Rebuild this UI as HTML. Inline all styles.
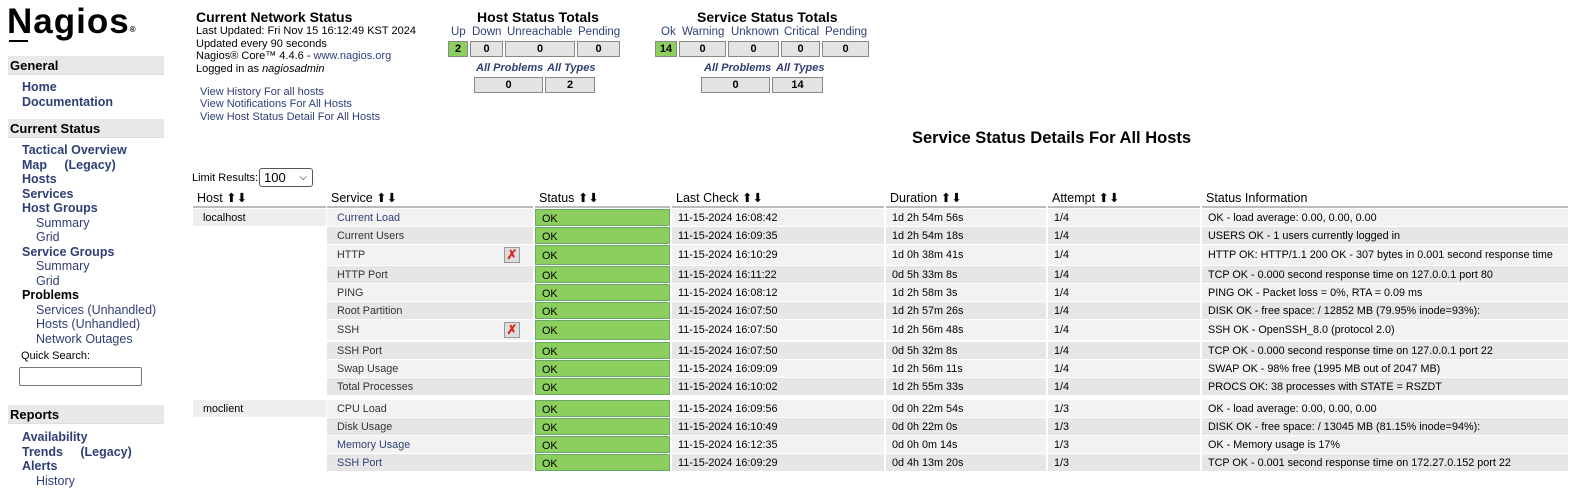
<!DOCTYPE html>
<html><head><meta charset="utf-8"><style>
body{margin:0;width:1572px;height:481px;overflow:hidden;background:#fff;font-family:"Liberation Sans",Arial,sans-serif;color:#000;position:relative}
.a{position:absolute;white-space:nowrap}
.nav{font-size:12.5px;font-weight:bold;color:#2f3f75;line-height:14.5px}
.sub{font-weight:normal;color:#2f3f75}
.hd{position:absolute;left:8px;width:156px;height:19px;background:#e8e8e8;border-bottom:1px solid #ddd;font-weight:bold;font-size:13px;line-height:19px;padding-left:2px;box-sizing:border-box}
.lk{color:#2f3f75}
.box{position:absolute;height:16px;background:#e3e3e3;border:1px solid #888;box-sizing:border-box;font-size:11px;font-weight:bold;text-align:center;line-height:15px}
.g{background:#8ccf5f}
.lbl{position:absolute;font-size:11.5px;color:#2f3f75;white-space:nowrap}
.it{font-size:11px;font-style:italic;font-weight:bold}
.cell{position:absolute;font-size:10.8px;line-height:18px;padding-left:6px;box-sizing:border-box;white-space:nowrap}
.th{position:absolute;top:191px;height:17px;font-size:12.5px;border-bottom:2px solid #bbb;box-sizing:border-box;padding-left:4px;line-height:15px}
</style></head><body>
<div class="a" style="left:7px;top:3px;font-size:35px;font-weight:bold;letter-spacing:1px;line-height:38px">Nagios<span style="font-size:8px;vertical-align:top;position:relative;top:8px">®</span></div>
<div class="a" style="left:9px;top:40px;width:19px;height:2px;background:#000"></div>
<div class="hd" style="top:56px">General</div>
<div class="a nav" style="left:22px;top:80px">Home<br>Documentation</div>
<div class="hd" style="top:119px">Current Status</div>
<div class="a nav" style="left:22px;top:143px">Tactical Overview<br>Map &nbsp;&nbsp;&nbsp;&nbsp;<span class="sub" style="font-weight:bold">(Legacy)</span><br>Hosts<br>Services<br>Host Groups<br><span class="sub" style="padding-left:14px">Summary</span><br><span class="sub" style="padding-left:14px">Grid</span><br>Service Groups<br><span class="sub" style="padding-left:14px">Summary</span><br><span class="sub" style="padding-left:14px">Grid</span><br><span style="color:#000">Problems</span><br><span class="sub" style="padding-left:14px">Services (Unhandled)</span><br><span class="sub" style="padding-left:14px">Hosts (Unhandled)</span><br><span class="sub" style="padding-left:14px">Network Outages</span></div>
<div class="a" style="left:21px;top:350px;font-size:11px">Quick Search:</div>
<div class="a" style="left:19px;top:367px;width:123px;height:19px;border:1px solid #777;border-radius:2px;box-sizing:border-box"></div>
<div class="hd" style="top:405px">Reports</div>
<div class="a nav" style="left:22px;top:430px">Availability<br>Trends &nbsp;&nbsp;&nbsp;&nbsp;<span class="sub" style="font-weight:bold">(Legacy)</span><br>Alerts<br><span class="sub" style="padding-left:14px">History</span></div>

<div class="a" style="left:196px;top:9px;font-size:14px;font-weight:bold">Current Network Status</div>
<div class="a" style="left:196px;top:25px;font-size:11px;line-height:12.5px">Last Updated: Fri Nov 15 16:12:49 KST 2024<br>Updated every 90 seconds<br>Nagios® Core™ 4.4.6 - <span class="lk">www.nagios.org</span><br>Logged in as <i>nagiosadmin</i></div>
<div class="a lk" style="left:200px;top:86px;font-size:11px;line-height:12.3px">View History For all hosts<br>View Notifications For All Hosts<br>View Host Status Detail For All Hosts</div>

<div class="a" style="left:477px;top:9px;font-size:14px;font-weight:bold">Host Status Totals</div>
<div class="lbl" style="left:451px;top:26px">Up</div><div class="lbl" style="left:472px;top:26px">Down</div><div class="lbl" style="left:507px;top:26px">Unreachable</div><div class="lbl" style="left:578px;top:26px">Pending</div>
<div class="box g" style="left:448px;top:41px;width:20px">2</div>
<div class="box" style="left:470px;top:41px;width:33px">0</div>
<div class="box" style="left:505px;top:41px;width:70px">0</div>
<div class="box" style="left:577px;top:41px;width:43px">0</div>
<div class="lbl it" style="left:476px;top:62px">All Problems</div><div class="lbl it" style="left:547px;top:62px">All Types</div>
<div class="box" style="left:474px;top:77px;width:69px">0</div>
<div class="box" style="left:545px;top:77px;width:50px">2</div>

<div class="a" style="left:697px;top:9px;font-size:14px;font-weight:bold">Service Status Totals</div>
<div class="lbl" style="left:661px;top:26px">Ok</div><div class="lbl" style="left:682px;top:26px">Warning</div><div class="lbl" style="left:731px;top:26px">Unknown</div><div class="lbl" style="left:784px;top:26px">Critical</div><div class="lbl" style="left:825px;top:26px">Pending</div>
<div class="box g" style="left:655px;top:41px;width:22px">14</div>
<div class="box" style="left:679px;top:41px;width:47px">0</div>
<div class="box" style="left:728px;top:41px;width:51px">0</div>
<div class="box" style="left:781px;top:41px;width:39px">0</div>
<div class="box" style="left:822px;top:41px;width:47px">0</div>
<div class="lbl it" style="left:704px;top:62px">All Problems</div><div class="lbl it" style="left:776px;top:62px">All Types</div>
<div class="box" style="left:701px;top:77px;width:69px">0</div>
<div class="box" style="left:772px;top:77px;width:51px">14</div>

<div class="a" style="left:912px;top:129px;font-size:16.5px;font-weight:bold">Service Status Details For All Hosts</div>
<div class="a" style="left:192px;top:172px;font-size:11px">Limit Results:</div>
<div class="a" style="left:259px;top:168px;width:54px;height:19px;border:1px solid #555;border-radius:3px;box-sizing:border-box;font-size:13px;line-height:17px;padding-left:4px">100 <span style="font-size:10px;position:absolute;right:5px">&#x2335;</span></div>

<div class="th" style="left:193px;width:133px">Host ⬆⬇</div>
<div class="th" style="left:327px;width:206px">Service ⬆⬇</div>
<div class="th" style="left:535px;width:135px">Status ⬆⬇</div>
<div class="th" style="left:672px;width:212px">Last Check ⬆⬇</div>
<div class="th" style="left:886px;width:160px">Duration ⬆⬇</div>
<div class="th" style="left:1048px;width:152px">Attempt ⬆⬇</div>
<div class="th" style="left:1202px;width:366px">Status Information</div>

<div class="cell" style="left:193px;top:209px;width:133px;height:17px;background:#eee;padding-left:10px">localhost</div>
<div class="cell" style="left:193px;top:400px;width:133px;height:17px;background:#eee;padding-left:10px">moclient</div>

<style>
.r .c1{left:327px;width:206px}.r .c2{left:535px;width:135px;background:#8ccf5f !important;border:1px solid #6a6;}
.r .c3{left:672px;width:212px}.r .c4{left:886px;width:160px}.r .c5{left:1048px;width:152px}.r .c6{left:1202px;width:366px}
.r .cell{height:17px}
.o .cell{background:#f2f2f2}.e .cell{background:#e6e6e6}
.ic{position:absolute;left:504px;width:16px;height:16px;background:#ddd;border:1px solid #999;box-sizing:border-box;color:#d22;font-size:13px;line-height:14px;text-align:center;font-weight:bold}
</style>
<div class="r o"><div class="cell c1 lk" style="top:209px;padding-left:10px">Current Load</div><div class="cell c2" style="top:209px">OK</div><div class="cell c3" style="top:209px">11-15-2024 16:08:42</div><div class="cell c4" style="top:209px">1d 2h 54m 56s</div><div class="cell c5" style="top:209px">1/4</div><div class="cell c6" style="top:209px">OK - load average: 0.00, 0.00, 0.00</div></div>
<div class="r e"><div class="cell c1" style="top:227px;padding-left:10px;color:#333">Current Users</div><div class="cell c2" style="top:227px">OK</div><div class="cell c3" style="top:227px">11-15-2024 16:09:35</div><div class="cell c4" style="top:227px">1d 2h 54m 18s</div><div class="cell c5" style="top:227px">1/4</div><div class="cell c6" style="top:227px">USERS OK - 1 users currently logged in</div></div>
<div class="r o"><div class="cell c1" style="top:245px;height:20px;line-height:20px;padding-left:10px;color:#333">HTTP</div><div class="cell c2" style="top:245px;height:20px;line-height:20px">OK</div><div class="cell c3" style="top:245px;height:20px;line-height:20px">11-15-2024 16:10:29</div><div class="cell c4" style="top:245px;height:20px;line-height:20px">1d 0h 38m 41s</div><div class="cell c5" style="top:245px;height:20px;line-height:20px">1/4</div><div class="cell c6" style="top:245px;height:20px;line-height:20px">HTTP OK: HTTP/1.1 200 OK - 307 bytes in 0.001 second response time</div><div class="ic" style="top:247px">✗</div></div>
<div class="r e"><div class="cell c1" style="top:266px;padding-left:10px;color:#333">HTTP Port</div><div class="cell c2" style="top:266px">OK</div><div class="cell c3" style="top:266px">11-15-2024 16:11:22</div><div class="cell c4" style="top:266px">0d 5h 33m 8s</div><div class="cell c5" style="top:266px">1/4</div><div class="cell c6" style="top:266px">TCP OK - 0.000 second response time on 127.0.0.1 port 80</div></div>
<div class="r o"><div class="cell c1" style="top:284px;padding-left:10px;color:#333">PING</div><div class="cell c2" style="top:284px">OK</div><div class="cell c3" style="top:284px">11-15-2024 16:08:12</div><div class="cell c4" style="top:284px">1d 2h 58m 3s</div><div class="cell c5" style="top:284px">1/4</div><div class="cell c6" style="top:284px">PING OK - Packet loss = 0%, RTA = 0.09 ms</div></div>
<div class="r e"><div class="cell c1" style="top:302px;padding-left:10px;color:#333">Root Partition</div><div class="cell c2" style="top:302px">OK</div><div class="cell c3" style="top:302px">11-15-2024 16:07:50</div><div class="cell c4" style="top:302px">1d 2h 57m 26s</div><div class="cell c5" style="top:302px">1/4</div><div class="cell c6" style="top:302px">DISK OK - free space: / 12852 MB (79.95% inode=93%):</div></div>
<div class="r o"><div class="cell c1" style="top:320px;height:20px;line-height:20px;padding-left:10px;color:#333">SSH</div><div class="cell c2" style="top:320px;height:20px;line-height:20px">OK</div><div class="cell c3" style="top:320px;height:20px;line-height:20px">11-15-2024 16:07:50</div><div class="cell c4" style="top:320px;height:20px;line-height:20px">1d 2h 56m 48s</div><div class="cell c5" style="top:320px;height:20px;line-height:20px">1/4</div><div class="cell c6" style="top:320px;height:20px;line-height:20px">SSH OK - OpenSSH_8.0 (protocol 2.0)</div><div class="ic" style="top:322px">✗</div></div>
<div class="r e"><div class="cell c1" style="top:342px;padding-left:10px;color:#333">SSH Port</div><div class="cell c2" style="top:342px">OK</div><div class="cell c3" style="top:342px">11-15-2024 16:07:50</div><div class="cell c4" style="top:342px">0d 5h 32m 8s</div><div class="cell c5" style="top:342px">1/4</div><div class="cell c6" style="top:342px">TCP OK - 0.000 second response time on 127.0.0.1 port 22</div></div>
<div class="r o"><div class="cell c1" style="top:360px;padding-left:10px;color:#333">Swap Usage</div><div class="cell c2" style="top:360px">OK</div><div class="cell c3" style="top:360px">11-15-2024 16:09:09</div><div class="cell c4" style="top:360px">1d 2h 56m 11s</div><div class="cell c5" style="top:360px">1/4</div><div class="cell c6" style="top:360px">SWAP OK - 98% free (1995 MB out of 2047 MB)</div></div>
<div class="r e"><div class="cell c1" style="top:378px;padding-left:10px;color:#333">Total Processes</div><div class="cell c2" style="top:378px">OK</div><div class="cell c3" style="top:378px">11-15-2024 16:10:02</div><div class="cell c4" style="top:378px">1d 2h 55m 33s</div><div class="cell c5" style="top:378px">1/4</div><div class="cell c6" style="top:378px">PROCS OK: 38 processes with STATE = RSZDT</div></div>
<div class="r o"><div class="cell c1" style="top:400px;padding-left:10px;color:#333">CPU Load</div><div class="cell c2" style="top:400px">OK</div><div class="cell c3" style="top:400px">11-15-2024 16:09:56</div><div class="cell c4" style="top:400px">0d 0h 22m 54s</div><div class="cell c5" style="top:400px">1/3</div><div class="cell c6" style="top:400px">OK - load average: 0.00, 0.00, 0.00</div></div>
<div class="r e"><div class="cell c1" style="top:418px;padding-left:10px;color:#333">Disk Usage</div><div class="cell c2" style="top:418px">OK</div><div class="cell c3" style="top:418px">11-15-2024 16:10:49</div><div class="cell c4" style="top:418px">0d 0h 22m 0s</div><div class="cell c5" style="top:418px">1/3</div><div class="cell c6" style="top:418px">DISK OK - free space: / 13045 MB (81.15% inode=94%):</div></div>
<div class="r o"><div class="cell c1 lk" style="top:436px;padding-left:10px">Memory Usage</div><div class="cell c2" style="top:436px">OK</div><div class="cell c3" style="top:436px">11-15-2024 16:12:35</div><div class="cell c4" style="top:436px">0d 0h 0m 14s</div><div class="cell c5" style="top:436px">1/3</div><div class="cell c6" style="top:436px">OK - Memory usage is 17%</div></div>
<div class="r e"><div class="cell c1 lk" style="top:454px;padding-left:10px">SSH Port</div><div class="cell c2" style="top:454px">OK</div><div class="cell c3" style="top:454px">11-15-2024 16:09:29</div><div class="cell c4" style="top:454px">0d 4h 13m 20s</div><div class="cell c5" style="top:454px">1/3</div><div class="cell c6" style="top:454px">TCP OK - 0.001 second response time on 172.27.0.152 port 22</div></div>
</body></html>
